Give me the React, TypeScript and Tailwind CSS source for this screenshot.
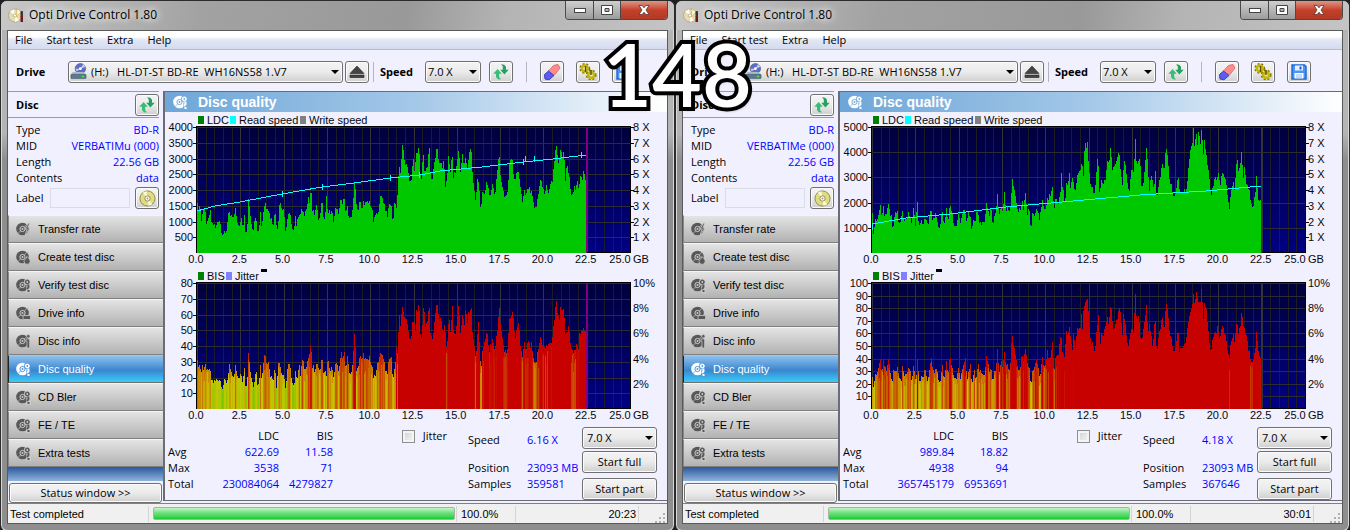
import { useId } from "react";
import type { ReactNode } from "react";

type Segment = { x0: number; base: number; points: string };

type Session = {
  name: string;
  mid: string;
  ldcMax: number;
  ldcStep: number;
  bisMax: number;
  ldc: Segment[];
  bis: Segment[];
  speed: [number, number][];
  speedTicks: number[];
  cursor: string;
  avg: [string, string];
  max: [string, string];
  total: [string, string];
  readSpeed: string;
  samples: string;
  time: string;
};

const PLOT_X = 32;
const PLOT_Y = 15;
const PLOT_W = 433;
const PLOT_H = 126;
const DATA_W = 390;

// Scan traces are "x:y" pairs at three units per plot pixel
const sessions: Session[] = [
  {
    name: "left",
    mid: "VERBATIMu (000)",
    ldcMax: 4000,
    ldcStep: 500,
    bisMax: 80,
    ldc: [
      {
        x0: 111,
        base: 443,
        points:
          "110:290 114:315 118:300 122:345 128:315 134:320 140:365 146:335 149:315 154:360 160:355 166:375 172:345 178:345 184:380 190:388 196:388 200:360 205:306 210:345 216:335 220:345 224:312 230:345 236:375 242:335 248:360 252:325 256:390 260:385 264:280 268:320 272:345 278:378 284:325 290:368 296:370 299:312 304:370 308:325 314:290 318:305 322:300 326:325 332:340 338:355 342:335 346:325 350:378 354:340 358:285 364:310 370:325 376:380 382:340 386:325 392:345 400:380 404:340 408:355 412:330 416:345 422:312 428:330 434:328 440:290 444:275 448:300 451:245 456:315 460:330 466:320 470:300 476:352 480:320 484:278 488:330 494:345 498:280 504:325 510:320 516:330 520:350 524:315 530:320 536:320 540:292 546:300 550:278 556:315 560:300 566:350 572:345 576:310 580:265 583:228 588:290 592:320 598:285 604:320 610:285 616:300 622:295 628:290 634:310 640:355 646:325 652:335 656:290 664:275 670:290 676:315 682:330 688:295 692:300 698:355 703:280 708:310 712:255 716:185 720:200 724:160 727:115 731:155 736:180 742:195 748:230",
      },
      {
        x0: -639,
        base: 443,
        points:
          "0:240 5:200 9:160 12:200 16:160 19:130 22:160 25:112 30:200 34:230 38:130 42:205 48:195 52:180 56:110 60:195 65:238 70:180 75:165 80:112 84:160 90:180 96:190 100:165 106:260 110:205 114:165 120:210 125:130 129:215 135:195 140:180 145:140 150:190 156:150 160:185 165:155 170:190 174:165 178:135 182:130 186:200 190:240 196:285 202:205 205:240 211:320 216:255 222:270 228:240 234:250 240:280 245:225 250:265 256:255 260:205 266:145 270:205 276:250 280:275 286:275 292:255 297:185 301:148 305:160 309:215 314:240 320:195 326:210 330:250 336:295 342:265 348:270 354:250 360:260 366:275 371:318 376:310 382:285 386:250 392:215 396:240 402:270 408:245 414:260 420:245 426:225 430:180 434:150 439:115 444:180 448:145 452:125 456:165 460:140 465:225 470:180 474:200 480:250 485:280 490:255 496:245 500:218 506:255 510:210 515:235 519:205 524:210 528:245",
      },
    ],
    bis: [
      {
        x0: 111,
        base: 432,
        points:
          "110:280 114:305 118:300 122:330 125:290 130:325 136:300 142:330 148:310 152:345 158:350 164:352 170:345 176:340 180:350 186:365 192:355 198:350 202:345 206:292 210:325 216:335 220:345 225:310 230:325 236:355 240:325 246:345 252:305 256:375 260:365 264:262 268:315 274:340 280:365 286:310 290:350 296:350 299:292 304:345 308:300 313:262 318:290 324:285 328:325 334:340 340:335 344:310 349:375 353:285 358:295 362:320 368:335 376:368 382:310 386:300 392:330 400:365 406:320 410:340 416:305 420:330 425:290 430:300 436:320 440:278 446:280 449:245 451:238 455:305 460:315 466:320 472:285 478:330 484:270 488:320 494:320 498:340 502:262 506:320 512:310 520:335 526:298 532:310 538:310 542:268 548:290 550:258 556:300 562:275 568:345 574:320 578:270 583:205 588:310 592:310 598:275 604:290 610:265 616:290 622:290 628:275 634:305 640:345 646:330 650:310 656:268 662:275 668:268 674:310 680:325 686:290 692:270 698:345 704:300 709:235 712:275 716:145 720:180 724:150 727:130 731:150 736:160 742:190 748:220",
      },
      {
        x0: -639,
        base: 432,
        points:
          "0:235 5:185 10:165 15:200 19:110 22:165 25:100 30:200 34:228 40:110 44:190 48:180 52:165 56:110 60:200 66:225 70:195 74:160 80:103 85:155 90:165 95:190 98:205 104:180 108:250 112:210 116:165 120:210 126:118 130:215 136:195 140:180 145:122 150:195 156:155 162:180 166:120 170:180 175:135 178:155 182:118 186:200 190:225 196:275 200:235 203:145 208:265 212:318 216:255 222:235 230:205 236:260 242:245 245:210 250:250 256:240 262:190 266:125 270:170 276:225 280:260 286:260 290:265 296:180 301:145 306:150 310:175 314:240 320:185 326:175 330:250 336:280 342:240 348:260 354:225 358:250 364:240 370:300 376:300 382:265 388:230 392:210 396:235 402:250 410:245 416:230 422:250 428:190 434:150 437:100 442:145 446:170 451:118 456:145 460:135 464:205 470:215 474:180 480:235 486:265 492:265 498:230 504:245 508:200 514:210 518:195 522:200 525:195 528:238",
      },
    ],
    speed: [[0, 84], [18, 79], [43, 75], [85, 67], [125, 60], [157, 56], [193, 51], [223, 48], [243, 44], [285, 40], [326, 35], [356, 32], [389, 28]],
    speedTicks: [85, 125, 193, 222, 326, 328, 337, 384],
    cursor: "#800080",
    avg: ["622.69", "11.58"],
    max: ["3538", "71"],
    total: ["230084064", "4279827"],
    readSpeed: "6.16 X",
    samples: "359581",
    time: "20:23",
  },
  {
    name: "right",
    mid: "VERBATIMe (000)",
    ldcMax: 5000,
    ldcStep: 1000,
    bisMax: 100,
    ldc: [
      {
        x0: 97,
        base: 428,
        points:
          "97:310 100:370 106:330 112:325 118:310 122:285 126:330 130:295 134:325 140:310 145:280 150:320 154:320 158:360 162:320 168:300 172:295 176:350 180:350 186:295 192:335 198:340 204:310 208:320 214:340 220:300 226:345 232:268 236:345 242:330 246:345 254:335 258:320 264:345 270:290 276:320 282:315 288:310 294:345 300:355 306:285 312:350 318:295 324:325 330:285 336:300 342:345 348:350 354:320 360:335 366:320 372:300 378:330 386:300 394:350 400:330 404:345 410:300 416:330 422:340 428:325 432:345 440:280 446:320 452:300 458:335 464:320 468:290 472:262 478:310 484:300 490:285 494:243 498:315 504:290 510:310 514:255 518:200 522:240 526:265 530:295 536:310 540:295 546:270 550:300 556:258 562:310 566:290 572:358 578:300 584:320 590:300 598:320 604:300 608:270 612:305 618:285 624:270 632:255 638:235 642:290 648:270 654:280 660:255 664:192 668:235 674:285 680:215 684:220 688:190 692:240 696:195 702:240 708:235 714:190 720:175 726:165 730:200 732:120 738:105 742:105 746:165 750:220 756:230 762:260 768:195 774:135 778:255 784:215 790:220 796:205 802:155 808:155 812:105 816:175 822:165 828:170 834:130 838:140 844:205 848:220 852:160 858:180 864:230 868:245 872:180 880:195 884:130 886:78 890:170 894:160 900:140 904:230 910:220 916:150 920:110 924:180 928:240 932:190 938:210 942:245 946:185 950:265 956:220 962:200 966:165 972:180 976:140 980:95 984:170 990:215 996:240 1002:270 1008:235 1014:205 1020:250 1026:245 1032:250 1036:240 1042:220 1046:170 1052:120 1056:110 1060:58 1064:120 1068:65 1072:110 1076:62 1080:110 1084:65 1090:130 1094:90 1098:140 1104:180 1108:215 1112:255 1118:240 1124:200 1130:205 1134:185 1140:230 1144:205 1148:180 1154:205 1160:235 1168:295 1174:240 1178:215 1184:235 1190:140 1196:200 1200:165 1204:135 1210:200 1214:175 1220:230 1226:240 1232:265 1238:290 1244:265 1250:198 1254:280 1260:270 1264:250",
      },
    ],
    bis: [
      {
        x0: 97,
        base: 432,
        points:
          "97:340 100:365 106:330 112:320 118:305 122:285 126:335 130:290 136:315 140:320 145:280 150:320 156:360 160:310 166:320 172:300 178:350 184:345 188:290 192:335 198:340 204:315 208:315 214:345 220:310 228:350 232:275 238:345 244:340 250:335 256:315 262:345 266:325 272:280 278:300 284:320 290:305 296:350 302:350 306:280 312:350 318:290 324:320 330:275 336:300 342:335 348:345 354:315 360:340 366:320 376:290 382:335 390:300 396:350 402:320 408:345 414:305 420:320 426:315 432:340 440:275 446:315 452:320 458:340 466:315 472:262 478:320 484:295 488:300 494:262 498:310 504:305 510:320 514:240 518:218 522:245 526:280 530:300 538:325 544:270 550:290 557:258 562:290 568:320 572:362 578:310 584:305 590:290 596:320 602:335 606:280 612:310 618:285 622:265 628:290 634:262 638:232 642:310 648:280 656:262 662:200 666:245 672:295 678:205 684:205 688:190 692:215 696:265 700:215 706:245 712:200 718:185 722:185 724:155 728:215 731:105 735:130 739:97 744:120 748:190 752:230 758:240 764:265 768:205 772:190 775:150 780:250 784:210 790:210 796:180 802:160 806:180 812:122 815:140 820:190 826:185 832:165 836:135 842:140 846:215 850:160 856:185 862:230 866:245 872:190 880:215 883:145 886:78 890:175 894:155 898:170 902:230 908:210 914:165 919:128 924:200 928:175 934:210 938:250 942:190 946:170 950:265 956:210 962:190 966:160 972:195 978:125 980:92 984:160 990:205 996:240 1002:270 1008:230 1014:200 1018:260 1026:245 1032:255 1038:215 1044:190 1048:160 1054:140 1060:92 1064:120 1070:82 1074:120 1080:120 1084:78 1090:160 1094:112 1100:150 1104:195 1110:265 1116:240 1122:205 1128:205 1132:180 1138:225 1144:200 1148:175 1154:210 1160:240 1168:280 1172:240 1178:205 1184:230 1190:160 1194:220 1200:190 1205:145 1210:180 1214:205 1218:200 1224:255 1230:270 1236:290 1244:270 1250:200 1254:265 1260:280 1264:262",
      },
    ],
    speed: [[0, 103], [0, 97], [6, 96], [34, 91], [78, 87], [134, 80], [201, 74], [268, 68], [334, 64], [389, 59]],
    speedTicks: [],
    cursor: "#5a1a5a",
    avg: ["989.84", "18.82"],
    max: ["4938", "94"],
    total: ["365745179", "6953691"],
    readSpeed: "4.18 X",
    samples: "367646",
    time: "30:01",
  },
];

const noise = (n: number) => {
  const v = Math.sin(n * 12.9898) * 43758.5453;
  return v - Math.floor(v);
};

const toHeights = (segments: Segment[]) => {
  const pts = segments.flatMap((s) =>
    s.points.split(" ").map((pair) => {
      const [x, y] = pair.split(":").map(Number);
      return [(x - s.x0) / 3, (s.base - y) / 3];
    }),
  );
  const heights: number[] = [];
  let k = 0;
  for (let i = 0; i < DATA_W; i++) {
    while (k < pts.length - 2 && pts[k + 1][0] < i) k++;
    const [ax, ay] = pts[k];
    const [bx, by] = pts[k + 1];
    const t = Math.min(1, Math.max(0, (i - ax) / (bx - ax)));
    heights.push(Math.round(ay + (by - ay) * t + noise(i + 3) * 7 - 3));
  }
  return heights;
};

const heat = (value: number) =>
  `hsl(${Math.max(0, Math.min(120, 118 - value * 3))} 100% 39%)`;

const range = (n: number) => Array.from({ length: n }, (_, i) => i);

type ChartProps = {
  id: string;
  label: string;
  legend: { text: string; color: string; x: number }[];
  leftMax: number;
  leftStep: number;
  rightTicks: { text: string; y: number }[];
  tickRight?: boolean;
  marker?: boolean;
  cursor: string;
  children: ReactNode;
};

const Chart = ({ id, label, legend, leftMax, leftStep, rightTicks, tickRight, marker, cursor, children }: ChartProps) => {
  const rows = leftMax / leftStep;
  return (
    <svg
      viewBox="0 0 502 156"
      role="img"
      aria-label={label}
      className="block w-full h-auto font-['Liberation_Sans',Arial,sans-serif] text-[11px]"
      fill="#08080c"
    >
      <defs>
        <linearGradient id={id} x1="0" y1="0" x2="0" y2="1">
          <stop offset="0" stopColor="#00003c" />
          <stop offset="1" stopColor="#000084" />
        </linearGradient>
      </defs>
      {legend.map((l) => (
        <g key={l.text}>
          <rect x={l.x} y={4} width={6} height={8} fill={l.color} />
          <text x={l.x + 9} y={12}>{l.text}</text>
        </g>
      ))}
      {marker && <rect x={96} y={1} width={6} height={3} fill="#000" />}
      <rect x={PLOT_X} y={PLOT_Y} width={PLOT_W} height={PLOT_H} fill={`url(#${id})`} />
      <g shapeRendering="crispEdges">
        {range(51).map((i) => (
          <rect
            key={i}
            x={PLOT_X + Math.round((i * PLOT_W) / 50)}
            y={PLOT_Y}
            width={1}
            height={PLOT_H}
            fill={i % 5 ? "#1c1c24" : "#33333a"}
          />
        ))}
        {range(rows).map((i) => (
          <rect
            key={i}
            x={PLOT_X}
            y={PLOT_Y + Math.round((i * PLOT_H) / rows)}
            width={PLOT_W}
            height={1}
            fill="#2b2b33"
          />
        ))}
        {children}
        <rect x={PLOT_X + DATA_W - 1} y={PLOT_Y} width={1} height={PLOT_H} fill={cursor} />
        <path d={`M${PLOT_X - 0.5} ${PLOT_Y + PLOT_H}V${PLOT_Y - 0.5}H${PLOT_X + PLOT_W + 0.5}V${PLOT_Y + PLOT_H}`} fill="none" stroke="#000" />
        <rect x={PLOT_X + DATA_W} y={PLOT_Y + PLOT_H - 1} width={PLOT_W - DATA_W} height={1} fill="#000" />
        {range(rows).map((i) => (
          <rect key={i} x={PLOT_X - 4} y={PLOT_Y + Math.round((i * PLOT_H) / rows)} width={3} height={1} />
        ))}
        {tickRight &&
          rightTicks.map((t) => (
            <rect key={t.text} x={PLOT_X + PLOT_W + 1} y={PLOT_Y + Math.round(t.y)} width={3} height={1} />
          ))}
      </g>
      {range(rows).map((i) => (
        <text key={i} x={PLOT_X - 4} y={PLOT_Y + 4 + Math.round((i * PLOT_H) / rows)} textAnchor="end">
          {leftMax - i * leftStep}
        </text>
      ))}
      {rightTicks.map((t) => (
        <text key={t.text} x={468} y={PLOT_Y + 4 + Math.round(t.y)}>{t.text}</text>
      ))}
      {range(11).map((i) => (
        <text key={i} x={i === 10 ? 455 : PLOT_X - 1 + (i * PLOT_W) / 10} y={151} textAnchor="middle">
          {(i * 2.5).toFixed(1)}
        </text>
      ))}
      <text x={468} y={151}>GB</text>
    </svg>
  );
};

const DiscIcon = ({ color = "#555", gap = "#cfcfcf", variant = "search" }: { color?: string; gap?: string; variant?: string }) => (
  <svg viewBox="0 0 16 16" className="size-4 shrink-0" aria-hidden="true">
    <circle cx="7.500" cy="8" r="6.300" fill={color} />
    <circle cx="7.500" cy="8" r="2.600" fill="none" stroke={gap} strokeWidth="1" />
    <circle cx="7.500" cy="8" r="1" fill={gap} />
    <path d="M9.500 6l3-3.500M5.500 10l-3 3" stroke={gap} strokeWidth=".7" />
    {variant === "bolt" && <path d="M13.500 2l-3.500 6h2.200l-2 6L15 7h-2.200l2-5z" fill={color} stroke={gap} strokeWidth=".8" />}
    {variant === "flame" && <path d="M12 7.500c2 2 3.200 3.200 3.200 4.800a3 3 0 01-6.200 0C9 11 11.500 10 12 7.500z" fill={color} stroke={gap} strokeWidth=".8" />}
    {variant === "drive" && <rect x="8" y="10.500" width="7.500" height="4" rx="1" fill={color} stroke={gap} strokeWidth=".8" />}
    {variant === "info" && (
      <g fill={color} stroke={gap} strokeWidth=".7">
        <circle cx="13.300" cy="3.200" r="1.700" />
        <path d="M11 6h3.600v9h-2.600V8.200h-1z" />
      </g>
    )}
    {variant === "search" && (
      <g>
        <path d="M11 8.500h5V16h-5z" fill={gap} opacity=".7" />
        <circle cx="12.300" cy="5" r="3.200" fill={gap} />
        <circle cx="12.300" cy="5" r="2" fill={color} stroke={color} />
        <circle cx="12.300" cy="5" r=".9" fill={gap} />
        <path d="M13.500 7.500v3l-1.500 1.500M12.500 14h2" fill="none" stroke={color} strokeWidth="1.800" />
      </g>
    )}
  </svg>
);

const RefreshIcon = () => (
  <svg viewBox="0 0 16 16" className="size-4" aria-hidden="true">
    <path d="M4.600 5L.300 9.800H3V13l1.800 2.300L8 15.500l-1.800-2.200V9.800h2.600z" fill="#36bd76" />
    <path d="M11.400 10.500l4.300-4.800H13V2.800L11.200.700 8 .3l1.800 2.200v3.200H7.200z" fill="#27a060" />
  </svg>
);

const EraserIcon = () => (
  <svg viewBox="0 0 18 18" className="size-[18px]" aria-hidden="true">
    <path d="M10.500 2.500L15 1.500l2 3.500-6 7.500-5.500-4.500z" fill="#ff8c8c" stroke="#e07070" />
    <path d="M5.500 8L1.500 11.500l.5 4.500 4 .8 5-4.300z" fill="#5c5cf0" stroke="#4040c0" />
  </svg>
);

const GearsIcon = () => (
  <svg viewBox="0 0 18 18" className="size-[18px]" aria-hidden="true">
    <g fill="none" stroke="#857a00" strokeWidth="2" strokeDasharray="2 1.600">
      <circle cx="5.800" cy="5.500" r="4.400" />
      <circle cx="12.200" cy="12" r="4.400" />
    </g>
    <g fill="none" stroke="#c4b60c" strokeWidth="2.600">
      <circle cx="5.800" cy="5.500" r="2.900" />
      <circle cx="12.200" cy="12" r="2.900" />
    </g>
    <path d="M6.500 3v6M12 7v5" stroke="#5a5200" strokeWidth="1.400" />
  </svg>
);

const SaveIcon = () => (
  <svg viewBox="0 0 16 16" className="size-4" aria-hidden="true">
    <path d="M1 1h12.500L15 2.500V15H1z" fill="#4a94f8" stroke="#1a66d8" strokeWidth="1.400" />
    <rect x="4" y="1.500" width="8" height="5" fill="#e8f1ff" />
    <rect x="8.500" y="2.500" width="2" height="3" fill="#1560d0" />
    <rect x="3.500" y="9" width="9" height="5.500" fill="#fff" />
    <path d="M5 11h6M5 13h6" stroke="#8fb8ee" />
  </svg>
);

const EjectIcon = () => (
  <svg viewBox="0 0 16 14" className="w-4 h-3.5" aria-hidden="true" fill="#444" stroke="#222" strokeWidth=".6">
    <path d="M8 1l7 7.500H1z" />
    <rect x="1" y="10" width="14" height="2.600" />
  </svg>
);

const DriveIcon = () => (
  <svg viewBox="0 0 18 18" className="size-[17px]" aria-hidden="true">
    <circle cx="11" cy="6" r="5.500" fill="#5f6fc0" stroke="#3c4787" strokeWidth=".6" />
    <path d="M11 6l3-5 2.500 3zM11 6l-4 3-1-3z" fill="#c3cbf2" />
    <circle cx="11" cy="6" r="1.500" fill="#fff" />
    <path d="M3 9.500h11l3 3H1z" fill="#a9bccb" />
    <rect x="1" y="12" width="16" height="4.500" rx="1" fill="#5d7890" stroke="#3c5266" strokeWidth=".6" />
    <rect x="12.500" y="13.500" width="2.500" height="1.500" fill="#3df03d" />
  </svg>
);

const CdIcon = () => (
  <svg viewBox="0 0 18 18" className="size-[17px]" aria-hidden="true">
    <circle cx="9" cy="9" r="8" fill="#dfdc84" stroke="#8b8840" />
    <path d="M9 9L4 2.800A8 8 0 018 1.200zM9 9l5 6.200a8 8 0 01-4 1.600z" fill="#fbfadc" />
    <circle cx="9" cy="9" r="2.800" fill="#fff" stroke="#8b8840" />
    <circle cx="9" cy="9" r="1" fill="#9a9a70" />
  </svg>
);

const AppIcon = () => (
  <svg viewBox="0 0 16 16" className="size-4" aria-hidden="true">
    <circle cx="7" cy="8.500" r="6.500" fill="#e6dcb0" stroke="#a0946a" strokeWidth=".6" />
    <path d="M7 8.500L2 4.500 6 2zM7 8.500l4 5-4 1.500z" fill="#fffdf0" />
    <circle cx="7" cy="8.500" r="1.600" fill="#fff" stroke="#8a805c" strokeWidth=".5" />
    <path d="M9 1.500L13 5l-4.500 5z" fill="#fff8d8" stroke="#c9a545" strokeWidth=".6" />
    <rect x="12.500" y="4" width="2.500" height="6" rx="1" fill="#333" />
    <rect x="12.500" y="9" width="2.500" height="6" fill="#701818" />
  </svg>
);

const buttonLook =
  "flex items-center justify-center rounded-[3px] border border-[#707070] bg-linear-to-b from-[#f4f4f4] via-[#ebebeb] via-50% to-[#cfcfcf] shadow-[inset_0_0_0_1px_#fbfbfb]";

const IconButton = ({ label, children }: { label: string; children: ReactNode }) => (
  <button type="button" aria-label={label} className={`${buttonLook} w-6 h-[22px] shrink-0`}>
    {children}
  </button>
);

const Select = ({ id, value, label, className = "", textClass = "pl-1" }: { id: string; value: string; label?: string; className?: string; textClass?: string }) => (
  <div className={`relative h-[22px] ${className}`}>
    <select
      id={id}
      aria-label={label}
      defaultValue={value}
      className={`${buttonLook} appearance-none w-full h-full pr-3 ${textClass}`}
    >
      <option>{value}</option>
    </select>
    <svg viewBox="0 0 8 4" className="absolute right-1 top-[9px] w-2 h-1 pointer-events-none" aria-hidden="true">
      <path d="M0 0h8L4 4z" fill="#000" />
    </svg>
  </div>
);

const navItems = [
  { label: "Transfer rate", variant: "bolt" },
  { label: "Create test disc", variant: "flame" },
  { label: "Verify test disc", variant: "search" },
  { label: "Drive info", variant: "drive" },
  { label: "Disc info", variant: "info" },
  { label: "Disc quality", variant: "search", active: true },
  { label: "CD Bler", variant: "search" },
  { label: "FE / TE", variant: "search" },
  { label: "Extra tests", variant: "search" },
];

const TitleBar = () => (
  <header className="flex items-start justify-between h-[29px] pl-px">
    <h1 className="flex items-center gap-[5px] h-7 text-xs text-black [text-shadow:0_0_8px_#fff,0_0_8px_#fff]">
      <AppIcon />
      Opti Drive Control 1.80
    </h1>
    <div className="flex h-[19px] rounded-b-[4px] border border-t-0 border-[#4a4a4a] overflow-hidden divide-x divide-[#4a4a4a]">
      <button type="button" aria-label="Minimize" className="w-7 flex items-center justify-center bg-linear-to-b from-[#cfcfcf] via-[#b5b5b5] via-50% to-[#9c9c9c]">
        <svg viewBox="0 0 12 5" className="w-3 h-[5px]"><rect x=".5" y=".5" width="11" height="4" fill="#fff" stroke="#444" /></svg>
      </button>
      <button type="button" aria-label="Maximize" className="w-[27px] flex items-center justify-center bg-linear-to-b from-[#cfcfcf] via-[#b5b5b5] via-50% to-[#9c9c9c]">
        <svg viewBox="0 0 12 10" className="w-3 h-2.5">
          <path d="M.5.500h11v9H.5zM4 3.500v3h4v-3z" fill="#fff" fillRule="evenodd" stroke="#444" />
        </svg>
      </button>
      <button type="button" aria-label="Close" className="w-[46px] flex items-center justify-center bg-linear-to-b from-[#dd9484] via-[#c4402a] via-50% to-[#b03a26]">
        <svg viewBox="0 0 12 10" className="w-3 h-2.5">
          <path d="M1 .5h3.200L6 2.800 7.800.5H11L8 5l3 4.500H7.800L6 7.200 4.200 9.500H1L4 5z" fill="#fff" stroke="#5a3030" strokeWidth=".8" />
        </svg>
      </button>
    </div>
  </header>
);

const Sidebar = ({ session, id }: { session: Session; id: string }) => {
  const info = [
    ["Type", "BD-R"],
    ["MID", session.mid],
    ["Length", "22.56 GB"],
    ["Contents", "data"],
  ];
  return (
    <aside className="w-[155px] shrink-0 flex flex-col">
      <div className="flex items-center justify-between h-[27px] mr-1 pl-2 border-y border-[#9a9aa2]">
        <h2 className="font-bold">Disc</h2>
        <IconButton label="Reload disc"><RefreshIcon /></IconButton>
      </div>
      <div className="pt-1 pb-[5px] pl-2 pr-1">
        <dl>
          {info.map(([k, v]) => (
            <div key={k} className="flex justify-between h-4 leading-4">
              <dt>{k}</dt>
              <dd className="text-[#0000ff]">{v}</dd>
            </div>
          ))}
        </dl>
        <div className="flex items-center h-6">
          <label htmlFor={`${id}-label`} className="w-[34px]">Label</label>
          <input id={`${id}-label`} type="text" className="flex-1 min-w-0 h-5 mr-[5px] border border-[#dcdce4] bg-transparent px-1" />
          <IconButton label="Disc label"><CdIcon /></IconButton>
        </div>
      </div>
      <nav className="font-['Liberation_Sans',Arial,sans-serif]">
        {navItems.map((item) => (
          <button
            key={item.label}
            type="button"
            className={`flex items-center gap-[7px] w-full h-7 pl-1.5 border-t border-l border-b ${
              item.active
                ? "text-white border-t-[#9cc8f0] border-l-[#222] border-b-[#707070] bg-linear-to-b from-[#8cc0ec] via-[#3a86cf] via-55% to-[#38ccf8]"
                : "text-black border-t-[#f4f4f4] border-l-[#888] border-b-[#808080] bg-linear-to-b from-[#e4e4e4] to-[#b2b2b2]"
            }`}
          >
            <DiscIcon
              variant={item.variant}
              color={item.active ? "#ffffff" : "#585858"}
              gap={item.active ? "#4f96dc" : "#cccccc"}
            />
            {item.label}
          </button>
        ))}
      </nav>
      <div className="flex-1 min-h-[13px] bg-linear-to-b from-[#2c579c] to-[#8fb4da]" />
      <div className="pt-0.5 px-px">
        <button type="button" className={`${buttonLook} w-full h-5`}>Status window &gt;&gt;</button>
      </div>
    </aside>
  );
};

const Results = ({ session, id }: { session: Session; id: string }) => {
  const rows: [string, [string, string]][] = [
    ["Avg", session.avg],
    ["Max", session.max],
    ["Total", session.total],
  ];
  return (
    <div className="flex pl-[3px] pr-[10px]">
      <div className="pt-1">
        <table className="leading-4 text-right">
          <thead>
            <tr>
              <th className="w-[46px]" aria-label="Statistic" />
              <th className="w-[65px] h-4 p-0 font-normal">LDC</th>
              <th className="w-[54px] p-0 font-normal">BIS</th>
            </tr>
          </thead>
          <tbody>
            {rows.map(([label, values]) => (
              <tr key={label}>
                <th className="h-4 p-0 font-normal text-left">{label}</th>
                {values.map((v) => (
                  <td key={v} className="p-0 text-[#0000ff]">{v}</td>
                ))}
              </tr>
            ))}
          </tbody>
        </table>
      </div>
      <label className="flex items-center gap-2 h-6 ml-auto mr-[21px]">
        <input
          type="checkbox"
          className="appearance-none size-[13px] border border-[#8e8f8f] bg-linear-to-br from-[#cdd0d5] to-[#f8f8f8] shadow-[inset_0_0_0_2px_#f4f4f4]"
        />
        Jitter
      </label>
      <dl className="grid grid-cols-[59px_50px] auto-rows-[16px] leading-4 pt-2 mr-[5px] whitespace-nowrap">
        <dt className="h-7">Speed</dt>
        <dd className="text-[#0000ff] h-7">{session.readSpeed}</dd>
        <dt className="mt-3">Position</dt>
        <dd className="mt-3 text-[#0000ff]">23093 MB</dd>
        <dt className="mt-3">Samples</dt>
        <dd className="mt-3 text-[#0000ff]">{session.samples}</dd>
      </dl>
      <div className="w-[75px] flex flex-col pt-[3px]">
        <Select id={`${id}-test-speed`} label="Test speed" value="7.0 X" />
        <button type="button" className={`${buttonLook} h-[22px] mt-0.5`}>Start full</button>
        <button type="button" className={`${buttonLook} h-[22px] mt-[5px]`}>Start part</button>
      </div>
    </div>
  );
};

const DriveWindow = ({ session }: { session: Session }) => {
  const id = useId();
  const ldc = toHeights(session.ldc);
  const bis = toHeights(session.bis);
  const bottom = PLOT_Y + PLOT_H;

  return (
    <section className="flex-1 min-w-0 rounded-[7px] border border-[#2c2c2c] bg-linear-to-b from-[#b4b4b4] from-25% to-[#8e8e8e] to-30% shadow-[inset_0_0_0_1px_#d8d8d8]">
      <div className="rounded-t-[6px] px-1.5 pb-[7px] bg-[linear-gradient(100deg,#c8c8c8_0,#a2a2a2_30%,#999_60%,#b4b4b4_75%,#c4c4c4_100%)] bg-size-[100%_29px] bg-no-repeat">
        <TitleBar />
        <div className="border border-[#5a5a5a] bg-[#f0f0ff] text-black">
          <nav className="flex items-center gap-3.5 h-[19px] pl-[7px] border-b border-[#b8bccc] bg-linear-to-b from-white from-30% via-[#e2e7f5] via-50% to-[#d4dbed]">
            {["File", "Start test", "Extra", "Help"].map((item) => (
              <button key={item} type="button">{item}</button>
            ))}
          </nav>

          <div className="flex items-center h-[41px] pl-2 pt-0.5">
            <label htmlFor={`${id}-drive`} className="w-[52px] font-bold">Drive</label>
            <div className="relative flex-1 max-w-[275px]">
              <Select
                id={`${id}-drive`}
                value={"(H:)\u00a0\u00a0\u00a0HL-DT-ST BD-RE\u00a0\u00a0WH16NS58 1.V7"}
                textClass="pl-[22px]"
              />
              <span className="absolute left-0.5 top-0.5"><DriveIcon /></span>
            </div>
            <span className="ml-0.5"><IconButton label="Eject"><EjectIcon /></IconButton></span>
            <span className="w-px h-5 mx-1 bg-[#b4b4bc]" />
            <label htmlFor={`${id}-speed`} className="w-[46px] pl-0.5 font-bold">Speed</label>
            <Select id={`${id}-speed`} value="7.0 X" className="w-14 ml-px" textClass="pl-0.5" />
            <span className="ml-2"><IconButton label="Refresh"><RefreshIcon /></IconButton></span>
            <span className="w-px h-5 mx-[13px] bg-[#b4b4bc]" />
            <div className="flex gap-3">
              <IconButton label="Erase"><EraserIcon /></IconButton>
              <IconButton label="Settings"><GearsIcon /></IconButton>
              <IconButton label="Save"><SaveIcon /></IconButton>
            </div>
          </div>

          <div className="flex">
            <Sidebar session={session} id={id} />
            <main className="flex-1 min-w-0 border-l-2 border-t border-b border-[#6c6c74] mb-0.5">
              <div className="flex items-center gap-2.5 h-5 pl-[7px] bg-linear-to-r from-[#6ea6d8] via-[#a4c8e8] via-50% to-white">
                <DiscIcon color="#ffffff" gap="#78aedd" />
                <h2 className="font-['Liberation_Sans',Arial,sans-serif] font-bold text-sm text-white">Disc quality</h2>
              </div>
              <Chart
                id={`ldc-${session.name}`}
                label="LDC and read speed"
                legend={[
                  { text: "LDC", color: "#008000", x: 33 },
                  { text: "Read speed", color: "#00ffff", x: 65 },
                  { text: "Write speed", color: "#808080", x: 135 },
                ]}
                leftMax={session.ldcMax}
                leftStep={session.ldcStep}
                rightTicks={range(8).map((i) => ({ text: `${8 - i} X`, y: (i * PLOT_H) / 8 }))}
                tickRight
                cursor={session.cursor}
              >
                {ldc.map((h, i) => (
                  <rect key={i} x={PLOT_X + i} y={bottom - h} width={1} height={h} fill="#00c800" />
                ))}
                <polyline
                  points={session.speed.map(([x, y]) => `${PLOT_X + x},${PLOT_Y + y}`).join(" ")}
                  fill="none"
                  stroke="#00ffff"
                />
                {session.speedTicks.map((x) => {
                  const next = session.speed.findIndex((p) => p[0] >= x);
                  return (
                    <rect key={x} x={PLOT_X + x} y={PLOT_Y + session.speed[next][1] - 3} width={1} height={6} fill="#00ffff" />
                  );
                })}
              </Chart>
              <Chart
                id={`bis-${session.name}`}
                label="BIS and jitter"
                legend={[
                  { text: "BIS", color: "#008000", x: 33 },
                  { text: "Jitter", color: "#8080ff", x: 61 },
                ]}
                leftMax={session.bisMax}
                leftStep={10}
                rightTicks={range(5).map((i) => ({ text: `${10 - i * 2}%`, y: (i * PLOT_H) / 5 }))}
                marker
                cursor={session.cursor}
              >
                {bis.map((h, i) => {
                  const value = (h / PLOT_H) * session.bisMax;
                  const inner = Math.round(h * (0.65 + noise(i + 91) * 0.3));
                  return (
                    <g key={i}>
                      <rect x={PLOT_X + i} y={bottom - h} width={1} height={h} fill={heat(value)} />
                      <rect
                        x={PLOT_X + i}
                        y={bottom - inner}
                        width={1}
                        height={inner}
                        fill={heat(value * (0.8 + noise(i + 17) * 0.25))}
                      />
                    </g>
                  );
                })}
              </Chart>
              <Results session={session} id={id} />
            </main>
          </div>

          <footer className="flex items-center h-5 border-t border-[#80808a] bg-[#f0f0f0] font-['Liberation_Sans',Arial,sans-serif] whitespace-nowrap">
            <span className="w-[141px] pl-0.5 border-r border-[#d4d4d4]">Test completed</span>
            <div
              role="progressbar"
              aria-label="Test progress"
              aria-valuenow={100}
              className="flex-1 h-[13px] ml-1 rounded-[2px] border border-[#a4b4a4] bg-linear-to-b from-[#c4f4c8] via-[#6ce080] via-45% to-[#08cc28]"
            />
            <span className="w-[60px] ml-px pl-1 border-x border-[#d4d4d4]">100.0%</span>
            <span className="w-[123px] pr-0.5 text-right border-r border-[#d4d4d4]">{session.time}</span>
            <svg viewBox="0 0 28 18" className="w-7 h-[18px]" aria-hidden="true" fill="#b0b0b0">
              <path d="M24 8h2v2h-2zM20 12h2v2h-2zM24 12h2v2h-2zM16 16h2v2h-2zM20 16h2v2h-2zM24 16h2v2h-2z" />
            </svg>
          </footer>
        </div>
      </div>
    </section>
  );
};

export default function App() {
  return (
    <div className="relative flex bg-[#202020] font-['Open_Sans','Noto_Sans',sans-serif] text-[11px] leading-4">
      {sessions.map((session) => (
        <DriveWindow key={session.name} session={session} />
      ))}
      <div className="absolute inset-x-0 top-6 pl-1 text-center font-['Lato',sans-serif] text-[86px] leading-[100px] font-semibold text-white pointer-events-none [paint-order:stroke] [stroke-linejoin:round] [-webkit-text-stroke:8px_#000] [text-shadow:2px_3px_3px_rgba(0,0,0,0.4)]">
        148
      </div>
    </div>
  );
}
